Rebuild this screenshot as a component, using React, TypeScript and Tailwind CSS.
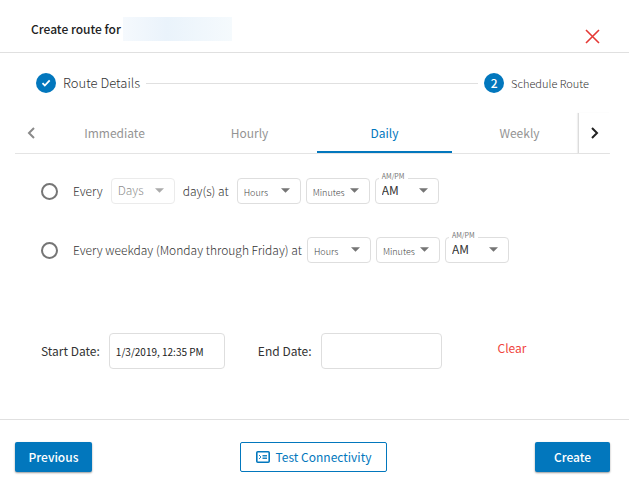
import { useState } from "react";

const tabs = ["Immediate", "Hourly", "Daily", "Weekly"];

type PickProps = {
  label: string;
  options: string[];
  disabled?: boolean;
  small?: boolean;
  notch?: string;
};

function Pick({ label, options, disabled, small, notch }: PickProps) {
  return (
    <div className={"relative h-[26px] w-16 shrink-0" + (disabled ? " opacity-60" : "")}>
      <select
        aria-label={label}
        disabled={disabled}
        className={
          "block h-full w-full appearance-none rounded border border-[#dedede] bg-white pl-1.5 outline-none " +
          (small
            ? "pt-1 text-[9px] font-light text-[#444444]"
            : disabled
              ? "pb-0.5 text-xs font-light text-[#444444]"
              : "pb-0.5 text-xs text-[#333333]")
        }
      >
        {options.map((o) => (
          <option key={o}>{o}</option>
        ))}
      </select>
      {notch && (
        <span className="absolute -top-1.5 left-1 bg-white px-[3px] text-[7px] leading-[8px] text-[#757575]">
          {notch}
        </span>
      )}
      <svg
        className="pointer-events-none absolute top-[10px] right-[11px] h-[5px] w-[9px] text-[#757575]"
        viewBox="0 0 8 4"
        fill="currentColor"
        aria-hidden="true"
      >
        <path d="M0 0h8L4 4z" />
      </svg>
    </div>
  );
}

function TimePicks() {
  return (
    <div className="flex gap-[5px]">
      <Pick label="Hours" options={["Hours", "1", "2", "3"]} small />
      <Pick label="Minutes" options={["Minutes", "00", "15", "30"]} small />
      <Pick label="AM or PM" options={["AM", "PM"]} notch="AM/PM" />
    </div>
  );
}

const radio =
  "size-[17px] shrink-0 appearance-none rounded-full border-2 border-[#757575] bg-white checked:border-[5px] checked:border-[#0277bd]";

export default function App() {
  const [active, setActive] = useState("Daily");
  const [start, setStart] = useState("1/3/2019, 12:35 PM");
  const [end, setEnd] = useState("");

  return (
    <main className="bg-white font-['Noto_Sans_CJK_SC','Noto_Sans',sans-serif] text-xs leading-5 text-[#333333]">
      <header className="flex h-[53px] items-center justify-between border-b border-[#e0e0e0] pt-[6px] pr-[29px] pl-[31px]">
        <h1 className="flex items-center gap-0.5 font-medium text-[#222222]">
          Create route for
          <span className="h-6 w-[109px] bg-linear-to-r from-[#f5f9fd] via-[#eaf3fb] via-40% to-[#f5fafd]" />
        </h1>
        <button type="button" aria-label="Close" className="mt-3.5 text-[#e53935]">
          <svg className="size-[15px]" viewBox="0 0 15 15" stroke="currentColor" strokeWidth="1.6" fill="none">
            <path d="M1 1l13 13M14 1L1 14" />
          </svg>
        </button>
      </header>

      <ol className="flex h-[60px] items-center pr-10 pl-9 font-light">
        <li className="flex items-center gap-[7px] text-[13px]">
          <span className="flex size-5 items-center justify-center rounded-full bg-[#0277bd] text-white">
            <svg className="size-2.5" viewBox="0 0 10 10" fill="none" stroke="currentColor" strokeWidth="1.8">
              <path d="M1.5 5.2l2.3 2.3L8.7 2.3" />
            </svg>
          </span>
          Route Details
        </li>
        <li aria-hidden="true" className="mx-[6px] h-px flex-1 bg-[#e0e0e0]" />
        <li className="flex items-center gap-[7px] text-[11px]">
          <span className="flex size-5 items-center justify-center rounded-full bg-[#0277bd] text-xs font-medium text-white">
            2
          </span>
          Schedule Route
        </li>
      </ol>

      <nav className="mr-[19px] ml-[15px] flex h-[41px] border-b border-[#e4e4e4]">
        <button type="button" aria-label="Earlier tabs" className="flex w-8 items-center justify-center text-[#8a8a8a]">
          <svg className="h-3 w-2" viewBox="0 0 8 12" fill="none" stroke="currentColor" strokeWidth="2">
            <path d="M7 1L2 6l5 5" />
          </svg>
        </button>
        <div role="tablist" className="flex min-w-0 flex-1 overflow-hidden">
          {tabs.map((t) => (
            <button
              key={t}
              type="button"
              role="tab"
              aria-selected={t === active}
              onClick={() => setActive(t)}
              className={
                "w-[135px] shrink-0 border-b-2 pt-0.5 " +
                (t === active ? "border-[#0277bd] text-[#0277bd]" : "border-transparent text-[#949494]")
              }
            >
              {t}
            </button>
          ))}
        </div>
        <button
          type="button"
          aria-label="Later tabs"
          className="flex w-8 items-center justify-center border-l border-[#dcdcdc] text-[#222222] shadow-[-1px_0_1px_rgba(0,0,0,0.06)]"
        >
          <svg className="h-3 w-2" viewBox="0 0 8 12" fill="none" stroke="currentColor" strokeWidth="2">
            <path d="M1 1l5 5-5 5" />
          </svg>
        </button>
      </nav>

      <form>
        <div className="space-y-[33px] px-[41px] pt-6">
          <div className="flex items-center">
            <input id="every-day" type="radio" name="repeat" className={radio} />
            <label htmlFor="every-day" className="mr-2 ml-[15px] font-light">
              Every
            </label>
            <Pick label="Days" options={["Days", "1", "2", "3"]} disabled />
            <span className="mx-2 font-light">day(s) at</span>
            <TimePicks />
          </div>
          <div className="flex items-center">
            <input id="weekday" type="radio" name="repeat" className={radio} />
            <label htmlFor="weekday" className="mr-[5px] ml-[15px] font-light">
              Every weekday (Monday through Friday) at
            </label>
            <TimePicks />
          </div>
        </div>

        <div className="flex items-center px-[41px] pt-[70px] pb-[50px]">
          <label htmlFor="start" className="mr-[9px]">
            Start Date:
          </label>
          <input
            id="start"
            value={start}
            onChange={(e) => setStart(e.target.value)}
            className="h-9 w-[116px] rounded border border-[#dedede] px-1.5 text-[10px] text-[#222222]"
          />
          <label htmlFor="end" className="mr-[9px] ml-[33px]">
            End Date:
          </label>
          <input
            id="end"
            value={end}
            onChange={(e) => setEnd(e.target.value)}
            className="h-9 w-[121px] rounded border border-[#dedede] px-1.5 text-[10px] text-[#222222]"
          />
          <button type="button" onClick={() => setEnd("")} className="mb-1.5 ml-14 text-[#f04440]">
            Clear
          </button>
        </div>

        <footer className="flex items-center justify-between border-t border-[#e0e0e0] pt-[22px] pr-[19px] pb-4 pl-[15px]">
          <button
            type="button"
            className="h-[30px] w-[77px] rounded-xs bg-[#0277bd] font-medium text-white shadow-[0_1px_2px_rgba(0,0,0,0.4)]"
          >
            Previous
          </button>
          <button
            type="button"
            className="flex h-[30px] w-[147px] items-center justify-center gap-1.5 rounded-xs border border-[#0277bd] text-[#0277bd]"
          >
            <svg className="h-3 w-3.5" viewBox="0 0 14 12" fill="none" stroke="currentColor" aria-hidden="true">
              <rect x="0.8" y="0.8" width="12.4" height="10.4" rx="1" strokeWidth="1.6" />
              <path d="M3 4l2 2-2 2M6.5 4.5H11M6.5 6H11M6.5 7.5H11" strokeWidth="0.9" />
            </svg>
            Test Connectivity
          </button>
          <button
            type="submit"
            className="h-[30px] w-[75px] rounded-xs bg-[#0277bd] font-medium text-white shadow-[0_1px_2px_rgba(0,0,0,0.4)]"
          >
            Create
          </button>
        </footer>
      </form>
    </main>
  );
}
